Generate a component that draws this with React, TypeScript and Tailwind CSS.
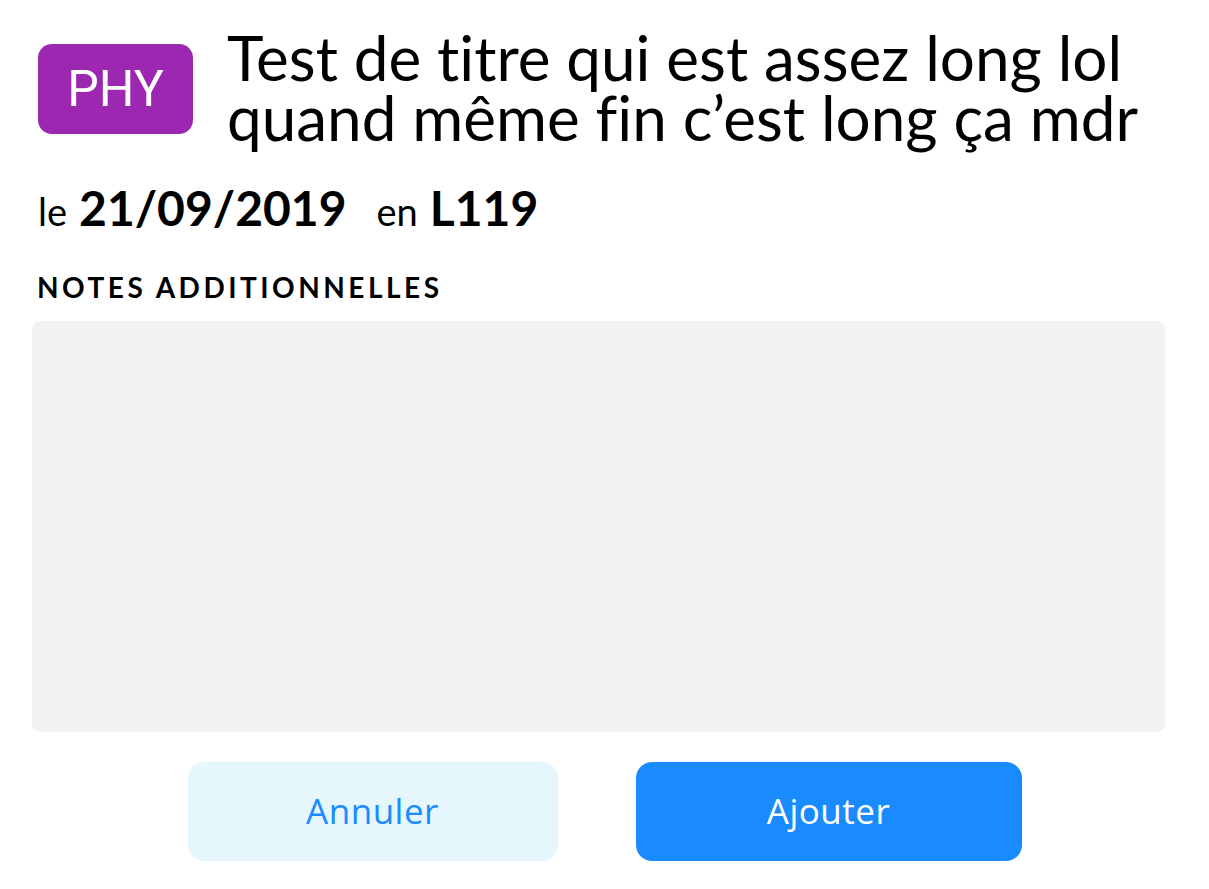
export default function App() {
  return (
    <div className="min-h-screen w-full bg-white text-black" style={{ fontFamily: "Lato, 'Noto Sans', sans-serif" }}>
      <div className="flex items-start gap-[34px] pl-[38px] pr-[44px] pt-[44px]">
        <div className="flex h-[90px] w-[155px] shrink-0 items-center justify-center rounded-[14px] bg-[#9c27b0] text-[50px] leading-none text-white" style={{ fontFamily: "Roboto, sans-serif" }}>
          PHY
        </div>
        <h1 className="mt-[-17px] text-[62px] leading-[60px] font-normal [font-variant-ligatures:none]">
          Test de titre qui est assez long lol quand même fin c’est long ça mdr
        </h1>
      </div>

      <div className="mt-[37px] flex items-baseline pl-[38px] leading-[48px]">
        <span className="text-[38px]">le</span>
        <span className="ml-[12px] text-[48px] font-bold">21/09/2019</span>
        <span className="ml-[30px] text-[38px]">en</span>
        <span className="ml-[12px] text-[48px] font-bold">L119</span>
      </div>

      <div className="pl-[32px] pr-[44px]">
        <p className="mt-[38px] pl-[5px] text-[28px] leading-[28px] font-bold tracking-[3.5px]">NOTES ADDITIONNELLES</p>
        <textarea className="mt-[20px] block h-[411px] w-full resize-none rounded-[8px] bg-[#f2f2f2] outline-none" />
      </div>

      <div className="mt-[30px] flex justify-center gap-[78px]" style={{ fontFamily: "'Open Sans', sans-serif" }}>
        <button className="h-[99px] w-[370px] rounded-[16px] bg-[#e6f6fd] text-[35px] tracking-[0.5px] text-[#1a8cff]">Annuler</button>
        <button className="h-[99px] w-[386px] rounded-[16px] bg-[#1a8aff] text-[35px] tracking-[0.5px] text-white">Ajouter</button>
      </div>
    </div>
  )
}
